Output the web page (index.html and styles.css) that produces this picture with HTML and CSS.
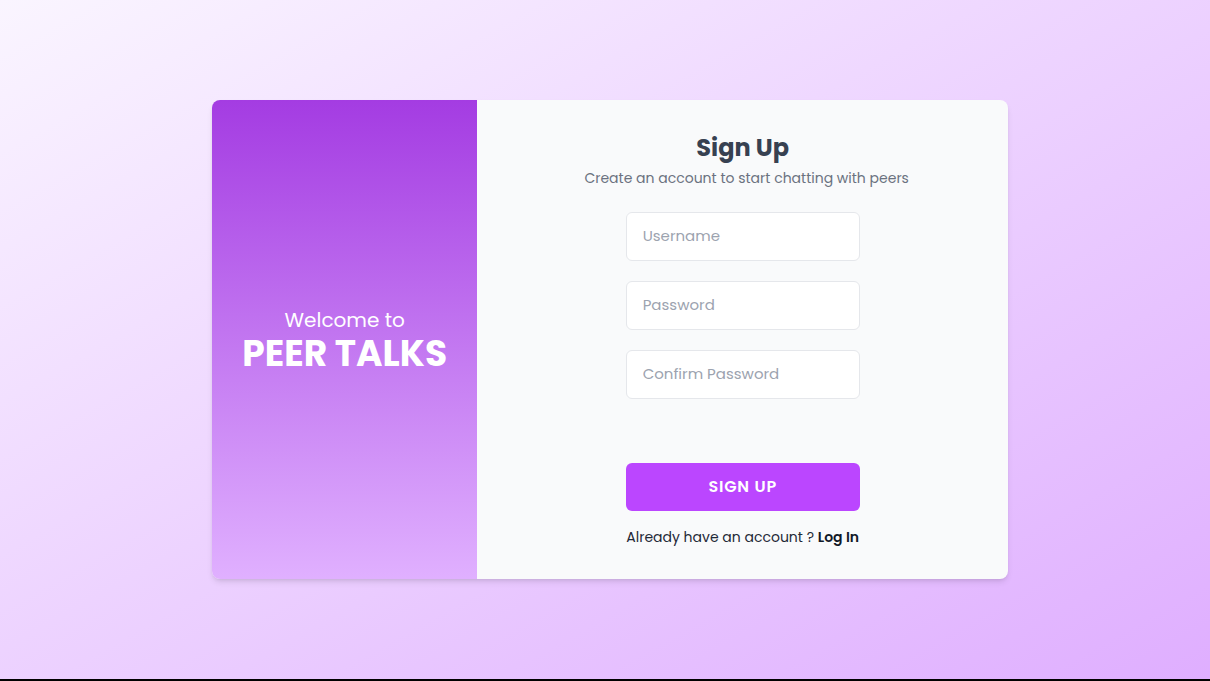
FILE: index.html
```html
<!DOCTYPE html>
<html lang="en">
<head>
<meta charset="utf-8">
<meta name="viewport" content="width=device-width, initial-scale=1">
<title>Peer Talks – Sign Up</title>
<link rel="stylesheet" href="styles.css">
</head>
<body>
<main class="page">
  <div class="card">
    <section class="welcome">
      <p class="welcome-lead">Welcome to</p>
      <h1 class="welcome-brand">PEER TALKS</h1>
    </section>
    <section class="signup">
      <h2 class="signup-title">Sign Up</h2>
      <p class="signup-note">Create an account to start chatting with peers</p>
      <form class="form">
        <input class="field" type="text" placeholder="Username" aria-label="Username">
        <input class="field" type="password" placeholder="Password" aria-label="Password">
        <input class="field" type="password" placeholder="Confirm Password" aria-label="Confirm Password">
        <button class="submit" type="submit">SIGN UP</button>
      </form>
      <p class="login">Already have an account ? <a class="login-link" href="#">Log In</a></p>
    </section>
  </div>
</main>
</body>
</html>
```
FILE: styles.css
```css
* { box-sizing: border-box; margin: 0; }
body {
  font-family: Poppins, "Open Sans", sans-serif;
  color: #1f2937;
}
.page {
  min-height: 100vh;
  display: flex;
  align-items: center;
  justify-content: center;
  padding-left: 10px;
  border-bottom: 2px solid #000;
  background: linear-gradient(to bottom right, #faf5ff, #dfaeff);
}
.card {
  display: grid;
  grid-template-columns: 1fr 2fr;
  width: 100%;
  max-width: 796px;
  border-radius: 8px;
  overflow: hidden;
  background: #f9fafb;
  box-shadow: 0 4px 6px -1px rgba(0, 0, 0, .1), 0 2px 4px -2px rgba(0, 0, 0, .1);
}
.welcome {
  display: flex;
  flex-direction: column;
  align-items: center;
  justify-content: center;
  color: #fff;
  background: linear-gradient(#a43ce2, #e0b0ff);
}
.welcome-lead { font-size: 20px; line-height: 28px; }
.welcome-brand { font-size: 36px; line-height: 40px; font-weight: 700; }
.signup {
  display: flex;
  flex-direction: column;
  align-items: center;
  padding: 32px;
}
.signup-title { font-size: 24px; line-height: 32px; font-weight: 700; color: #374151; }
.signup-note { padding: 4px 0 0 8px; font-size: 14px; line-height: 20px; color: #6b7280; }
.form { width: 234px; padding-top: 24px; display: flex; flex-direction: column; gap: 20px; }
.field {
  width: 100%;
  height: 49px;
  padding: 0 16px 2px;
  border: 1px solid #e5e7eb;
  border-radius: 6px;
  background: #fff;
  font: 15px/24px Poppins, "Open Sans", sans-serif;
  color: #1f2937;
}
.field::placeholder { color: #9ca3af; opacity: 1; }
.submit {
  height: 48px;
  margin-top: 44px;
  border: 0;
  border-radius: 6px;
  background: #bb46ff;
  color: #fff;
  font: 600 16px/24px Poppins, "Open Sans", sans-serif;
  letter-spacing: .05em;
}
.login { padding-top: 16px; font-size: 14px; line-height: 20px; }
.login-link { color: #111827; font-weight: 600; text-decoration: none; }
```
